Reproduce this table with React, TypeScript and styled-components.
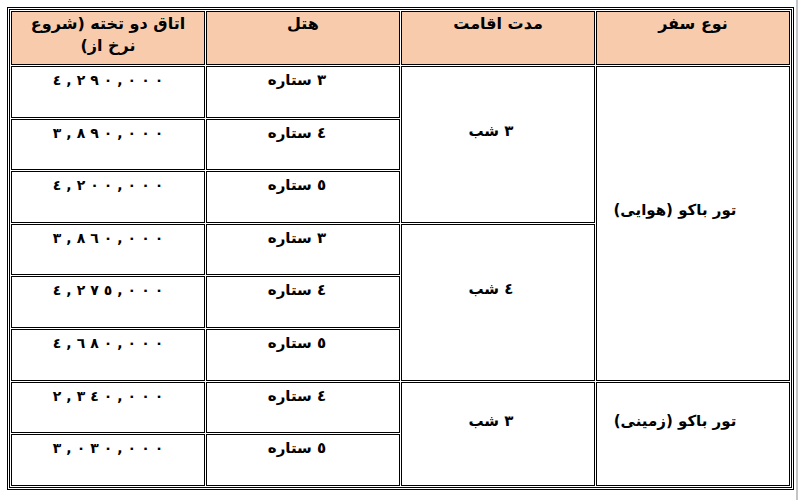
import styled, { createGlobalStyle } from 'styled-components'

const GlobalStyle = createGlobalStyle`
	html, body {
		margin: 0;
		padding: 0;
		background: #fff;
	}
`;

const Page = styled.div`
	box-sizing: border-box;
	width: 798px;
	height: 500px;
	padding: 7px 0 0 7px;
	border-right: 2px solid #c4c4c4;
	font-family: "DejaVu Sans", Tahoma, sans-serif;
	color: #000;
`;

const Table = styled.table`
	width: 787px;
	table-layout: fixed;
	direction: rtl;
	border: 3px double #000;
	border-collapse: separate;
	border-spacing: 1px;
`;

const HeadRow = styled.tr`
	height: 54px;
`;

const Row = styled.tr`
	height: 51.6px;
`;

const HeadCell = styled.th`
	border: 1px solid #000;
	background: #f8cbad;
	vertical-align: top;
	text-align: center;
	padding: 1px 10px;
	font-size: 16px;
	font-weight: bold;
	line-height: 22px;
`;

const Cell = styled.td<{ $middle?: boolean; $size?: number; $shift?: number }>`
	border: 1px solid #000;
	text-align: center;
	vertical-align: ${(p) => (p.$middle ? 'middle' : 'top')};
	padding: ${(p) => (p.$middle ? '0' : '3px')} ${(p) => p.$shift ?? 4}px
		${(p) => (p.$middle ? '26px' : '0')} 4px;
	font-size: ${(p) => p.$size ?? 14}px;
	font-weight: bold;
	line-height: 20px;
`;

const Price = styled.span`
	display: inline-flex;
	direction: ltr;
`;

const Digit = styled.span`
	display: inline-block;
	margin: 0 2.5px;
`;

type Line = {
	type?: { label: string; span: number };
	stay?: { label: string; span: number };
	hotel: string;
	price: string;
};

const lines: Line[] = [
	{ type: { label: 'تور باکو (هوایی)', span: 6 }, stay: { label: '٣ شب', span: 3 }, hotel: '٣ ستاره', price: '٤,٢٩٠,٠٠٠' },
	{ hotel: '٤ ستاره', price: '٣,٨٩٠,٠٠٠' },
	{ hotel: '٥ ستاره', price: '٤,٢٠٠,٠٠٠' },
	{ stay: { label: '٤ شب', span: 3 }, hotel: '٣ ستاره', price: '٣,٨٦٠,٠٠٠' },
	{ hotel: '٤ ستاره', price: '٤,٢٧٥,٠٠٠' },
	{ hotel: '٥ ستاره', price: '٤,٦٨٠,٠٠٠' },
	{ type: { label: 'تور باکو (زمینی)', span: 2 }, stay: { label: '٣ شب', span: 2 }, hotel: '٤ ستاره', price: '٢,٣٤٠,٠٠٠' },
	{ hotel: '٥ ستاره', price: '٣,٠٣٠,٠٠٠' },
];

const App = () => {
	return (
		<>
			<GlobalStyle />
			<Page>
				<Table>
					<thead>
						<HeadRow>
							<HeadCell>نوع سفر</HeadCell>
							<HeadCell>مدت اقامت</HeadCell>
							<HeadCell>هتل</HeadCell>
							<HeadCell>اتاق دو تخته (شروع نرخ از)</HeadCell>
						</HeadRow>
					</thead>
					<tbody>
						{lines.map((line, index) => (
							<Row key={index}>
								{line.type && (
									<Cell rowSpan={line.type.span} $middle $size={15} $shift={40}>
										{line.type.label}
									</Cell>
								)}
								{line.stay && (
									<Cell rowSpan={line.stay.span} $middle $size={15} $shift={18}>
										{line.stay.label}
									</Cell>
								)}
								<Cell $size={15} $shift={16}>{line.hotel}</Cell>
								<Cell>
									<Price>
										{line.price.split('').map((ch, i) => (
											<Digit key={i}>{ch}</Digit>
										))}
									</Price>
								</Cell>
							</Row>
						))}
					</tbody>
				</Table>
			</Page>
		</>
	)
}

export default App
